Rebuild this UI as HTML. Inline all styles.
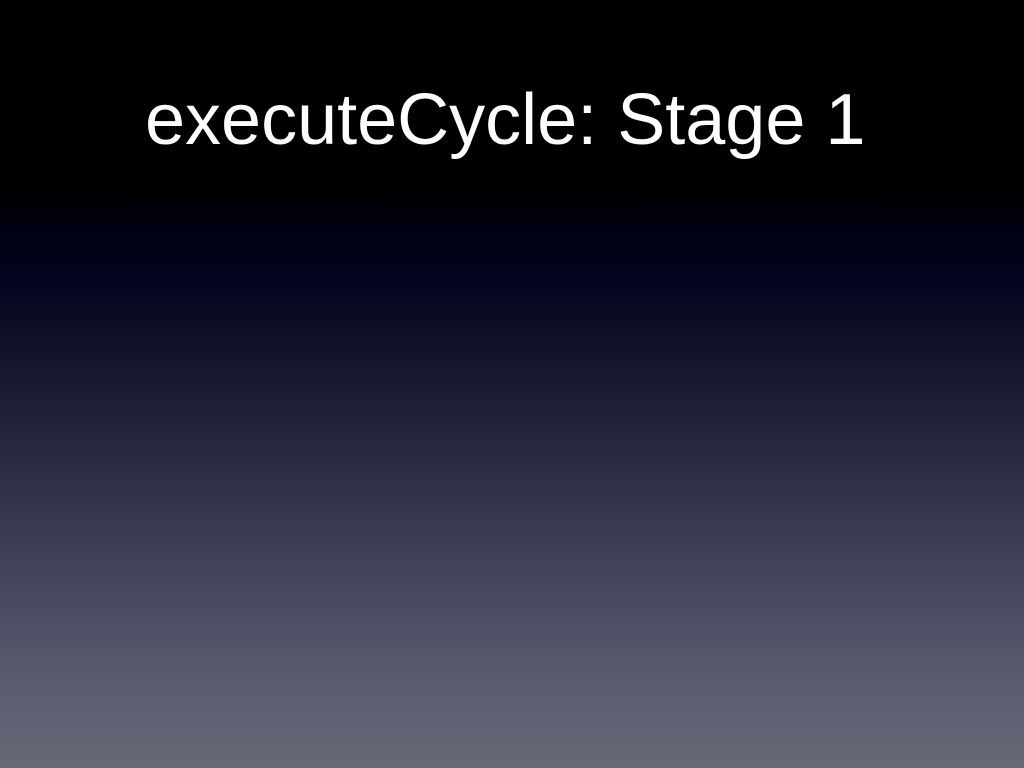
<!DOCTYPE html>
<html><head><meta charset="utf-8"><style>
html,body{margin:0;padding:0;}
body{width:1024px;height:768px;overflow:hidden;
background:linear-gradient(to bottom,#000 0px,#000 180px,#020420 280px,#14152c 360px,#2a2b42 460px,#45465c 580px,#5a5b6e 680px,#676877 768px);
position:relative;font-family:"Liberation Sans",sans-serif;}
h1{position:absolute;left:145px;top:80px;margin:0;font-weight:normal;color:#fff;font-size:72px;line-height:80px;white-space:nowrap;letter-spacing:0;}
</style></head><body>
<h1>executeCycle: Stage 1</h1>
</body></html>
